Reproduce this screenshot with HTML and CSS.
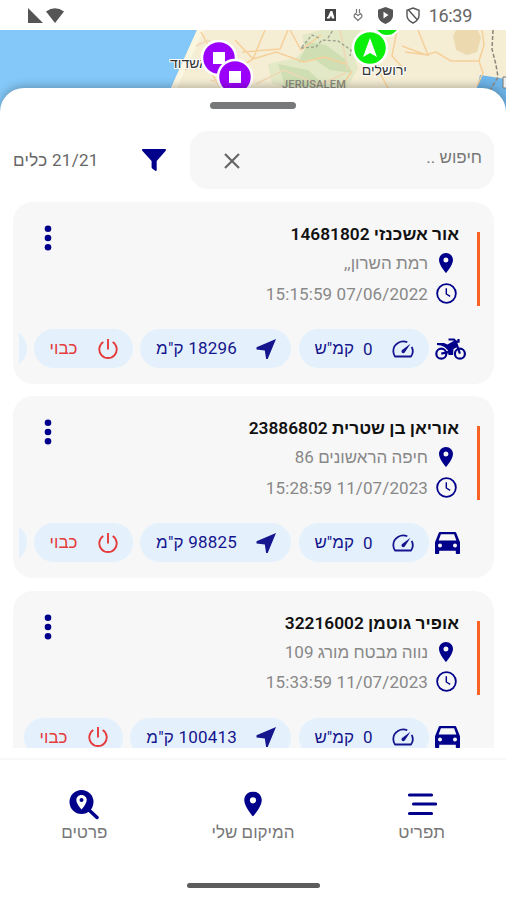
FILE: index.html
```html
<!DOCTYPE html>
<html lang="he" dir="rtl">
<head>
  <meta charset="UTF-8">
  <title>כלים</title>
  <link rel="stylesheet" href="styles.css">
</head>
<body>
  <!-- shared icons -->
  <svg class="defs" width="0" height="0">
    <symbol id="pin" viewBox="5 2 14 20"><path fill-rule="evenodd" d="M12 2C8.100 2 5 5.100 5 9c0 5.200 7 13 7 13s7-7.800 7-13c0-3.900-3.100-7-7-7zm0 9.500a2.500 2.500 0 1 1 0-5 2.500 2.500 0 0 1 0 5z"/></symbol>
    <symbol id="clock" viewBox="0 0 22 22"><circle cx="11" cy="11" r="9.800" fill="none" stroke="currentColor" stroke-width="1.900"/><path d="M10.800 5.500v6l4 2.600" fill="none" stroke="currentColor" stroke-width="1.500"/></symbol>
    <symbol id="dots" viewBox="0 0 8 26"><circle cx="4" cy="3.700" r="3.300"/><circle cx="4" cy="13" r="3.300"/><circle cx="4" cy="22.300" r="3.300"/></symbol>
    <symbol id="gauge" viewBox="0 0 22 18"><path fill="none" stroke="currentColor" stroke-width="1.800" stroke-linejoin="round" d="M15.300 2.300C9 -.6 1.300 4 1.300 11c0 2 .6 4 1.700 5.500h16c2.200-3 2.300-6.500.7-9.700"/><path d="M18.500 3.800l-5.600 8.500c-.7 1-2 1.200-2.900.4-.8-.9-.6-2.200.4-2.900z"/></symbol>
    <symbol id="arrow" viewBox="0 0 20 20"><path d="M20 0L.5 8.300v2.100l8.300 1.100 1.300 8.500h1.600z"/></symbol>
    <symbol id="power" viewBox="0 0 20 20"><path d="M10 0v10.500M5.300 3A8.700 8.700 0 1 0 14.700 3" fill="none" stroke="currentColor" stroke-width="1.900"/></symbol>
    <symbol id="car" viewBox="0 0 25 22"><path fill-rule="evenodd" d="M5.500 0h14c1 0 1.700.5 2 1.400L25 10.300V21c0 .6-.4 1-1 1h-2.200c-.6 0-1-.4-1-1v-2.200H4.200V21c0 .6-.4 1-1 1H1c-.6 0-1-.4-1-1V10.300L3.500 1.400C3.800.5 4.500 0 5.500 0zm.4 2.300L3.600 8.600h17.800l-2.300-6.300zM5 11.600a2 2 0 1 0 0 4 2 2 0 0 0 0-4zm15 0a2 2 0 1 0 0 4 2 2 0 0 0 0-4z"/></symbol>
    <symbol id="bike" viewBox="0 0 31 22">
      <g fill="none" stroke="currentColor" stroke-width="2.200">
        <circle cx="6.300" cy="15.700" r="5"/><circle cx="24.900" cy="15.700" r="5"/>
        <path d="M13.500 1.500h5.500l1.800 2.200 4.100 12M20.800 3.700h2.700V1M6.300 15.700l7-1.500"/>
      </g>
      <path d="M2 5h7l3.500 1.500 6-3.500 2 .7 2.300 5-4.300 2.300-.5 6h-4.500l-.8-5L9.500 9 6 7.600 2 7z"/>
    </symbol>
  </svg>

  <div class="phone">
    <header class="status">
      <div class="status-group" dir="ltr">
        <svg width="14" height="16" viewBox="0 0 14 16"><path fill="none" stroke="#444" stroke-width="1" d="M1.500 2.500h10v11h-10z"/><path fill="#444" fill-rule="evenodd" d="M1 2h11v12H1zM6.500 4L3.800 10H3v1.500h2.600L7 8.800l1 2.700h2.200V10L8.300 4z"/></svg>
        <svg width="10" height="16" viewBox="0 0 10 16"><path fill="none" stroke="#777" stroke-width="1.200" d="M3.500 2v4M6.500 2v4M5 13.500L1.200 10V8l1.300-1.500L5 8.500l2.500-2L8.800 8v2z"/></svg>
        <svg class="shield" width="15" height="17" viewBox="0 0 15 17"><path fill="#555" fill-rule="evenodd" d="M7.500 0L15 2.700v5.800c0 4-3.500 7-7.500 8.500C3.500 15.500 0 12.500 0 8.500V2.700zM5.500 4.800v6.600l5-3.300z"/></svg>
        <svg width="14" height="17" viewBox="0 0 14 17"><path fill="none" stroke="#555" stroke-width="1.400" d="M7 1l6 2.300v5.200c0 3.400-3 6-6 7.500-3-1.500-6-4.100-6-7.500V3.300zM2.500 3l9 10"/></svg>
        <span class="time">16:39</span>
      </div>
      <div class="status-group signal" dir="ltr">
        <svg width="15" height="15" viewBox="0 0 15 15"><path fill="#555" d="M0 0v15h15z"/></svg>
        <svg width="18" height="15" viewBox="0 0 18 15"><path fill="#555" d="M0 3.500Q9-3.200 18 3.500L9 15z"/></svg>
      </div>
    </header>

    <svg class="map" width="506" height="90" viewBox="0 30 506 90">
      <path fill="#f5edd4" d="M0 30h506v90H0z"/>
      <path fill="#83c8f8" d="M0 30h197l-26 58-14 32H0z"/>
      <path fill="#fbf6df" d="M197 30l-26 58h6l27-58z"/>
      <path fill="#e3e8c6" d="M302 35l20-5h38l-8 20 6 18-12 22h-50l-24-6-4-20 28-6 10-10z"/>
      <path fill="#cfdfb3" d="M303 41l23 4 20 15 6 13-22-3-16-11-16 4 8-16zM278 64l30 6 17 16h-40z"/>
      <path fill="#ecd9b0" d="M456 30h22l3 8-4 14-10 3-11-5-1-6-2-8z"/>
      <path fill="#6eb5e9" d="M480 75l26 4v41h-34l5-32z"/>
      <g fill="none" stroke="#f6d09a" stroke-width="1.500">
        <path d="M265 30l-12 29-20 12-8 17M253 59l23-7 28 10 20-5 22 7M235 40l18 19M290 30l11 20 20-15M405 52l23 3-10-25M402 46l24 9 10-3 15 9 28 0 4 12-6 13M185 70l17-12 18 29M201 32l10 18M482 30l2 15-5 16M376 66l12 22M352 71l-12 18M242 52l38-3 8-19M397 30l-5 26 11 12"/>
        <path stroke="#efd8b5" d="M256 84l28-14 35 15 27-12M196 46l12-6 15 10M340 30l8 40M210 80l26 7"/>
      </g>
      <path fill="none" stroke="#9ba090" stroke-width="1.300" stroke-dasharray="3 2" d="M301 48l15-1 6-7 16 1 13 9-1 6M302 47l10-12 7 3M328 38l5-8"/>
      <path fill="none" stroke="#8d867d" stroke-width="1.500" stroke-dasharray="4 2" d="M493 30l-1 19 4 16 2 12-9 15"/>
      <path fill="#eeeeec" d="M503 77h5v11h-5z" stroke="#777"/>
      <g class="map-label" direction="rtl">
        <text x="208" y="68" font-size="14">אשדוד</text>
        <text x="407" y="75" font-size="14">ירושלים</text>
      </g>
      <text class="map-city" x="282" y="88">JERUSALEM</text>
      <circle cx="387" cy="23" r="13" fill="#0bea0b" stroke="#fff" stroke-width="2"/>
      <circle cx="370" cy="48" r="17" fill="#0bf00b" stroke="#fff" stroke-width="2.500"/>
      <path fill="#fff" d="M370 38l7 19-7-4-7 4z"/>
      <g fill="#9b00fb" stroke="#fff" stroke-width="2.500">
        <circle cx="219" cy="58" r="17"/><path fill="#fff" stroke="none" d="M213 52h12v12h-12z"/>
        <circle cx="235" cy="77" r="17"/><path fill="#fff" stroke="none" d="M229 71h12v12h-12z"/>
      </g>
    </svg>

    <main class="sheet">
      <div class="handle"></div>
      <div class="tools">
        <div class="search">
          <span>חיפוש ..</span>
          <svg width="16" height="16" viewBox="0 0 16 16"><path stroke="#666" stroke-width="2.200" d="M1 1l14 14M15 1L1 15"/></svg>
        </div>
        <svg class="filter" width="24" height="22" viewBox="0 0 24 22"><path d="M1 0h22c1 0 1.300 1 .7 1.800L14.700 12v9c0 .8-.8 1.200-1.500.7l-3-2.300c-.4-.3-.6-.7-.6-1.200V12L.3 1.800C-.3 1 0 0 1 0z"/></svg>
        <span class="count">21/21 כלים</span>
      </div>

      <div class="list">
        <section class="card">
          <div class="card-top">
            <div class="bar"></div>
            <div class="info">
              <h2>אור אשכנזי 14681802</h2>
              <p><svg class="pin"><use href="#pin"/></svg><span>רמת השרון,,</span></p>
              <p><svg class="clock"><use href="#clock"/></svg><span class="date" dir="ltr">15:15:59 07/06/2022</span></p>
            </div>
            <svg class="dots"><use href="#dots"/></svg>
          </div>
          <div class="pills">
            <div class="vehicle"><svg class="bike"><use href="#bike"/></svg></div>
            <div class="pill speed"><svg class="gauge"><use href="#gauge"/></svg><span>0</span><span class="unit">קמ"ש</span></div>
            <div class="pill km"><svg class="arrow"><use href="#arrow"/></svg><span>18296 ק"מ</span></div>
            <div class="pill off"><svg class="power"><use href="#power"/></svg><span>כבוי</span></div>
            <div class="pill"></div>
          </div>
        </section>

        <section class="card">
          <div class="card-top">
            <div class="bar"></div>
            <div class="info">
              <h2>אוריאן בן שטרית 23886802</h2>
              <p><svg class="pin"><use href="#pin"/></svg><span>חיפה הראשונים 86</span></p>
              <p><svg class="clock"><use href="#clock"/></svg><span class="date" dir="ltr">15:28:59 11/07/2023</span></p>
            </div>
            <svg class="dots"><use href="#dots"/></svg>
          </div>
          <div class="pills">
            <div class="vehicle"><svg class="car"><use href="#car"/></svg></div>
            <div class="pill speed"><svg class="gauge"><use href="#gauge"/></svg><span>0</span><span class="unit">קמ"ש</span></div>
            <div class="pill km"><svg class="arrow"><use href="#arrow"/></svg><span>98825 ק"מ</span></div>
            <div class="pill off"><svg class="power"><use href="#power"/></svg><span>כבוי</span></div>
            <div class="pill"></div>
          </div>
        </section>

        <section class="card">
          <div class="card-top">
            <div class="bar"></div>
            <div class="info">
              <h2>אופיר גוטמן 32216002</h2>
              <p><svg class="pin"><use href="#pin"/></svg><span>נווה מבטח מורג 109</span></p>
              <p><svg class="clock"><use href="#clock"/></svg><span class="date" dir="ltr">15:33:59 11/07/2023</span></p>
            </div>
            <svg class="dots"><use href="#dots"/></svg>
          </div>
          <div class="pills">
            <div class="vehicle"><svg class="car"><use href="#car"/></svg></div>
            <div class="pill speed"><svg class="gauge"><use href="#gauge"/></svg><span>0</span><span class="unit">קמ"ש</span></div>
            <div class="pill km wide"><svg class="arrow"><use href="#arrow"/></svg><span>100413 ק"מ</span></div>
            <div class="pill off"><svg class="power"><use href="#power"/></svg><span>כבוי</span></div>
          </div>
        </section>
      </div>
    </main>

    <nav class="nav">
      <div class="tab">
        <svg width="30" height="30" viewBox="0 0 30 30"><path fill="none" stroke="currentColor" stroke-width="3.200" stroke-linecap="round" d="M2.500 5h22M6.500 14h22M2.500 23.500h22"/></svg>
        <span>תפריט</span>
      </div>
      <div class="tab">
        <svg width="18" height="30" viewBox="0 0 18 30"><use href="#pin" x="0" y="1.500" width="18" height="25"/></svg>
        <span>המיקום שלי</span>
      </div>
      <div class="tab">
        <svg width="30" height="30" viewBox="0 0 30 30"><circle cx="12.500" cy="12" r="12"/><path stroke="currentColor" stroke-width="3.500" stroke-linecap="round" d="M20 20l8 7.500"/><path fill="#fff" d="M12.500 5C9.500 5 7.300 7.200 7.300 10c0 3.800 5.200 9.500 5.200 9.500s5.200-5.700 5.200-9.500c0-2.800-2.200-5-5.200-5z"/><circle cx="12.500" cy="10" r="2"/></svg>
        <span>פרטים</span>
      </div>
    </nav>
    <div class="home"></div>
  </div>
</body>
</html>
```
FILE: styles.css
```css
* {
  box-sizing: border-box;
}
body {
  margin: 0;
  background: #fff;
  color: #777;
  font-family: Roboto, "Liberation Sans", "Open Sans", sans-serif;
  font-size: 17px;
}
svg {
  display: block;
  flex: none;
  fill: currentColor;
}
.defs {
  position: absolute;
}
.phone {
  width: 506px;
  height: 900px;
  overflow: hidden;
  display: flex;
  flex-direction: column;
}
.status {
  height: 30px;
  flex: none;
  display: flex;
  justify-content: space-between;
  align-items: center;
  padding: 0 34px 0 28px;
}
.status-group {
  display: flex;
  align-items: center;
  gap: 15px;
}
.status-group .shield {
  margin-right: -2px;
}
.signal {
  gap: 3px;
}
.time {
  margin-left: -6px;
  font-size: 18px;
  letter-spacing: -0.3px;
  color: #666;
}
.map {
  margin-bottom: -32px;
}
.map-label {
  font-family: "Liberation Sans", sans-serif;
  fill: #333;
  stroke: #fff;
  stroke-width: 2px;
  paint-order: stroke;
}
.map-city {
  font-size: 11px;
  font-weight: 500;
  letter-spacing: 0.2px;
  fill: #8c8c80;
  direction: ltr;
}
.sheet {
  position: relative;
  height: 670px;
  flex: none;
  display: flex;
  flex-direction: column;
  background: #fff;
  border-radius: 24px 24px 0 0;
  box-shadow: 0 -2px 8px rgba(0, 0, 0, 0.25);
}
.handle {
  width: 86px;
  height: 7px;
  flex: none;
  margin: 14px auto 22px;
  border-radius: 4px;
  background: #777879;
}
.tools {
  height: 58px;
  flex: none;
  display: flex;
  align-items: center;
  padding: 0 12px 0 13px;
}
.search {
  width: 304px;
  height: 58px;
  display: flex;
  align-items: center;
  justify-content: space-between;
  padding: 0 12px 0 34px;
  border-radius: 18px;
  background: #f7f7f7;
}
.search span {
  margin-top: -5px;
}
.search svg {
  margin-top: 2px;
}
.filter {
  margin-right: 24px;
  color: #00008b;
}
.count {
  margin-right: auto;
  letter-spacing: 0.3px;
  color: #666;
}
.list {
  margin: 13px 12px 0 13px;
  height: 546px;
  overflow: hidden;
}
.card {
  height: 182px;
  margin-bottom: 12.400px;
  padding-top: 20px;
  border-radius: 20px;
  background: #f7f7f7;
}
.card-top {
  height: 107px;
  display: flex;
  padding: 0 14px 0 31px;
}
.bar {
  width: 3px;
  height: 74px;
  margin: 10px 0 0 1px;
  background: #f96424;
}
.info {
  flex: 1;
  padding-right: 17px;
}
.info h2 {
  margin: 0;
  height: 26px;
  line-height: 24px;
  font-size: 17.300px;
  font-weight: 600;
  color: #111;
}
.info p {
  margin: 0;
  height: 30px;
  display: flex;
  align-items: center;
  gap: 8px;
  padding-right: 2px;
  color: #888;
}
.info p svg {
  color: #00008b;
}
.info p span {
  padding-top: 1px;
}
.info .date {
  letter-spacing: 0.1px;
}
.info .pin {
  width: 14px;
  height: 20px;
  margin: 0 4px 0 3px;
}
.info .clock {
  width: 21px;
  height: 21px;
}
.dots {
  width: 8px;
  height: 26px;
  margin-top: 3px;
  color: #00008b;
}
.pills {
  height: 39px;
  display: flex;
  gap: 7.500px;
  margin-left: 6px;
  padding-right: 28px;
  overflow: hidden;
  color: #15158d;
}
.vehicle {
  width: 30px;
  flex: none;
  display: flex;
  align-items: center;
  color: #00008b;
}
.car {
  width: 25px;
  height: 22px;
  margin-right: 6px;
}
.bike {
  width: 31px;
  height: 22px;
}
.pill {
  width: 98.500px;
  flex: none;
  display: flex;
  align-items: center;
  white-space: nowrap;
  padding-right: 15px;
  border-radius: 20px;
  background: #e4f1fd;
}
.speed {
  width: 130px;
}
.gauge {
  width: 22px;
  height: 18px;
  margin-left: 19px;
}
.unit {
  margin-right: 9px;
}
.km {
  width: 151px;
}
.km span {
  letter-spacing: 0.2px;
}
.wide {
  width: 161px;
}
.arrow {
  width: 20px;
  height: 20px;
  margin-left: 19px;
}
.off {
  color: #e53b3b;
}
.power {
  width: 20px;
  height: 20px;
  margin-left: 20px;
}
.nav {
  position: relative;
  height: 124px;
  flex: none;
  display: grid;
  grid-template-columns: repeat(3, 1fr);
  padding-top: 30px;
  border-top: 2px solid #f7f7f7;
  background: #fff;
}
.tab {
  display: flex;
  flex-direction: column;
  align-items: center;
  color: #00008b;
}
.tab span {
  line-height: 24px;
  color: #777;
}
.home {
  width: 133px;
  height: 5px;
  flex: none;
  margin: 1px auto 0;
  border-radius: 3px;
  background: #5c5c5c;
}
```
